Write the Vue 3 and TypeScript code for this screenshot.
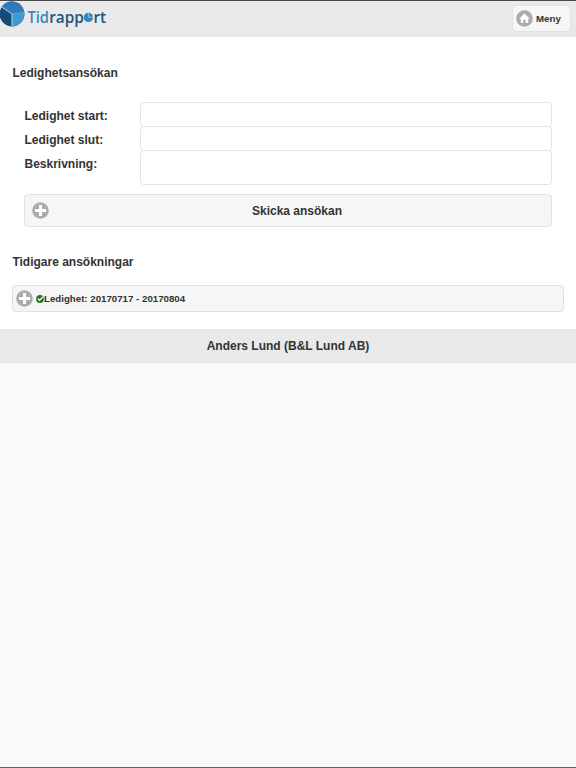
<script setup lang="ts">
import { ref } from 'vue'

const start = ref('')
const end = ref('')
const description = ref('')
const applications = [{ id: 1, label: 'Ledighet: 20170717 - 20170804' }]
</script>

<template>
  <div class="page">
    <header class="header">
      <svg class="logo" width="108" height="28" viewBox="0 0 108 28" aria-label="Tidrapport">
        <circle cx="12" cy="13" r="12.4" fill="#164b78" />
        <path d="M12 13 L1.8 6 A12.4 12.4 0 0 1 24.2 11 Z" fill="#3079bd" />
        <path d="M12 13 L24.2 11 A12.4 12.4 0 0 1 12 25.4 Z" fill="#3c9bd0" />
        <path d="M2 6.2 L12 13 V25.2" fill="none" stroke="#b9d3e4" stroke-width="1" />
        <path d="M12 13 L24 11" fill="none" stroke="#69afd9" stroke-width="0.7" />
        <text class="logo-text" x="27.5" y="21.6" textLength="21.5" lengthAdjust="spacingAndGlyphs" fill="#3c86bd">Tid</text>
        <text class="logo-text" x="49.2" y="21.6" textLength="34.6" lengthAdjust="spacingAndGlyphs" fill="#245579">rapp</text>
        <text class="logo-text" x="93.4" y="21.6" textLength="12.6" lengthAdjust="spacingAndGlyphs" fill="#245579">rt</text>
        <circle cx="88.4" cy="16.4" r="4.7" fill="#3187c5" />
        <path d="M88.4 12 V16.2 H93" fill="none" stroke="#a9d2eb" stroke-width="0.8" />
      </svg>
      <button class="menu" type="button">
        <svg width="17" height="17" viewBox="0 0 17 17">
          <circle cx="8.5" cy="8.5" r="8.3" fill="#acacac" />
          <path d="M8.5 3.4 L3.2 8.7 H4.8 V12.9 H7.3 V9.8 H9.7 V12.9 H12.2 V8.7 H13.8 Z" fill="#fff" />
        </svg>
        Meny
      </button>
    </header>

    <main class="content">
      <h2 class="title">Ledighetsansökan</h2>
      <form class="form" @submit.prevent>
        <div class="field">
          <label for="start">Ledighet start:</label>
          <input id="start" v-model="start" type="text" />
        </div>
        <div class="field">
          <label for="end">Ledighet slut:</label>
          <input id="end" v-model="end" type="text" />
        </div>
        <div class="field">
          <label for="description">Beskrivning:</label>
          <textarea id="description" v-model="description"></textarea>
        </div>
        <button class="submit" type="submit">
          <svg width="17" height="17" viewBox="0 0 17 17">
            <circle cx="8.5" cy="8.5" r="8.3" fill="#acacac" />
            <path d="M8.5 3 V14 M3 8.5 H14" stroke="#fff" stroke-width="3" />
          </svg>
          <span>Skicka ansökan</span>
        </button>
      </form>

      <h2 class="title previous">Tidigare ansökningar</h2>
      <button v-for="item in applications" :key="item.id" class="entry" type="button">
        <svg class="plus" width="17" height="17" viewBox="0 0 17 17">
          <circle cx="8.5" cy="8.5" r="8.3" fill="#acacac" />
          <path d="M8.5 3 V14 M3 8.5 H14" stroke="#fff" stroke-width="3" />
        </svg>
        <svg class="check" width="8" height="8" viewBox="0 0 8 8">
          <circle cx="4" cy="4" r="3.9" fill="#24752b" />
          <path d="M1.8 3.6 L3.5 5.3 L7.2 1.8" fill="none" stroke="#e2f2df" stroke-width="1.4" />
        </svg>
        <span>{{ item.label }}</span>
      </button>
    </main>

    <footer class="footer">Anders Lund (B&amp;L Lund AB)</footer>
  </div>
</template>

<style>
body {
  background: #f9f9f9;
}
</style>

<style scoped>
.page {
  box-sizing: border-box;
  min-height: 100vh;
  border-top: 1px solid #4b4b4d;
  border-bottom: 1px solid #626262;
  background: #f9f9f9;
  color: #333;
  font: bold 12px/16px "Liberation Sans", Arial, sans-serif;
}
.header {
  box-sizing: border-box;
  height: 36px;
  display: flex;
  justify-content: space-between;
  align-items: flex-start;
  padding-right: 5px;
  background: #e9e9e9;
}
.logo {
  display: block;
}
.logo-text {
  font: 600 16px "Open Sans", sans-serif;
}
button {
  box-sizing: border-box;
  margin: 0;
  display: flex;
  align-items: center;
  background: #f6f6f6;
  border: 1px solid #e1e1e1;
  border-radius: 4px;
  color: #333;
  font: bold 12px/16px "Liberation Sans", Arial, sans-serif;
}
svg {
  flex: none;
}
.menu {
  width: 59px;
  height: 27px;
  margin-top: 4px;
  padding: 0 0 0 3px;
  gap: 3px;
  font-size: 9.7px;
  border-color: #e2e2e2;
}
.content {
  box-sizing: border-box;
  height: 292px;
  padding: 28px 12px 0;
  background: #fff;
}
.title {
  margin: 0;
  padding-left: 0.4px;
  font-size: 12px;
  line-height: 16px;
}
.form {
  padding: 21px 12px 0;
}
.field {
  display: flex;
  height: 24px;
}
.field:nth-child(3) {
  height: 35px;
}
.field label {
  box-sizing: border-box;
  width: 116px;
  padding: 6px 0 0 0.5px;
  flex: none;
}
.field input,
.field textarea {
  box-sizing: border-box;
  flex: 1;
  min-width: 0;
  height: 25px;
  margin: 0;
  padding: 3px 5px;
  background: #fff;
  border: 1px solid #e3e3e3;
  border-radius: 4px;
  font: 12px/16px "Liberation Sans", Arial, sans-serif;
  outline: none;
  resize: none;
}
.field textarea {
  height: 35px;
}
.submit {
  width: 100%;
  height: 33px;
  margin-top: 9px;
  padding: 0 6px 0 7px;
}
.submit span {
  flex: 1;
  text-align: center;
}
.previous {
  margin-top: 27px;
}
.entry {
  width: 100%;
  height: 27px;
  margin-top: 15px;
  padding: 0 3px;
  font-size: 9.7px;
}
.check {
  margin-left: 3px;
}
.footer {
  box-sizing: border-box;
  height: 34px;
  padding-top: 8px;
  background: #e9e9e9;
  border-top: 1px solid #e4e4e4;
  border-bottom: 1px solid #e4e4e4;
  text-align: center;
}
</style>
